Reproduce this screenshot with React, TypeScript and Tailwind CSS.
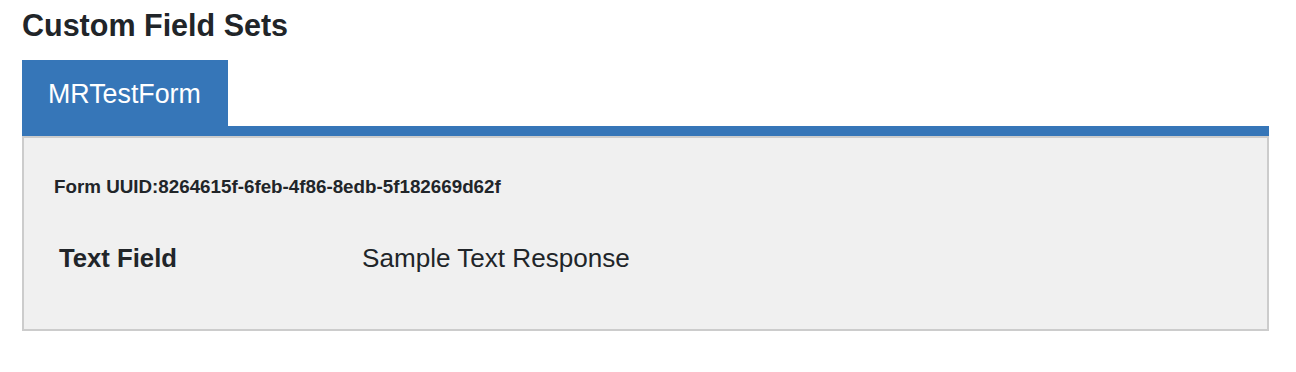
import React from 'react';

const fields = [{ label: 'Text Field', value: 'Sample Text Response' }];

export default function App() {
  return (
    <div
      className="bg-white min-h-screen px-[22px] pt-[7px] text-[#212529]"
      style={{ fontFamily: '"Liberation Sans", Arial, sans-serif' }}
    >
      <h2 className="text-[30.5px] leading-[36px] font-bold">Custom Field Sets</h2>

      <div className="mt-[17px] w-[1247px]">
        <div className="flex">
          <div className="w-[206px] bg-[#3676b8] text-white text-[26.8px] leading-[30px] pt-[19px] pb-[17px] px-[26px]">
            MRTestForm
          </div>
        </div>
        <div className="h-[10px] bg-[#3676b8]" />

        <div className="h-[195px] border-2 border-[#cccccc] bg-[#f0f0f0] pl-[30px] pt-[38px]">
          <div className="text-[18.8px] leading-[22px] font-bold">
            Form UUID:8264615f-6feb-4f86-8edb-5f182669d62f
          </div>

          {fields.map((f, i) => (
            <div key={i} className="flex mt-[45px] pl-[5px] leading-[30px]">
              <div className="w-[303px] text-[25.7px] font-bold">{f.label}</div>
              <div className="text-[26.1px]">{f.value}</div>
            </div>
          ))}
        </div>
      </div>
    </div>
  );
}
